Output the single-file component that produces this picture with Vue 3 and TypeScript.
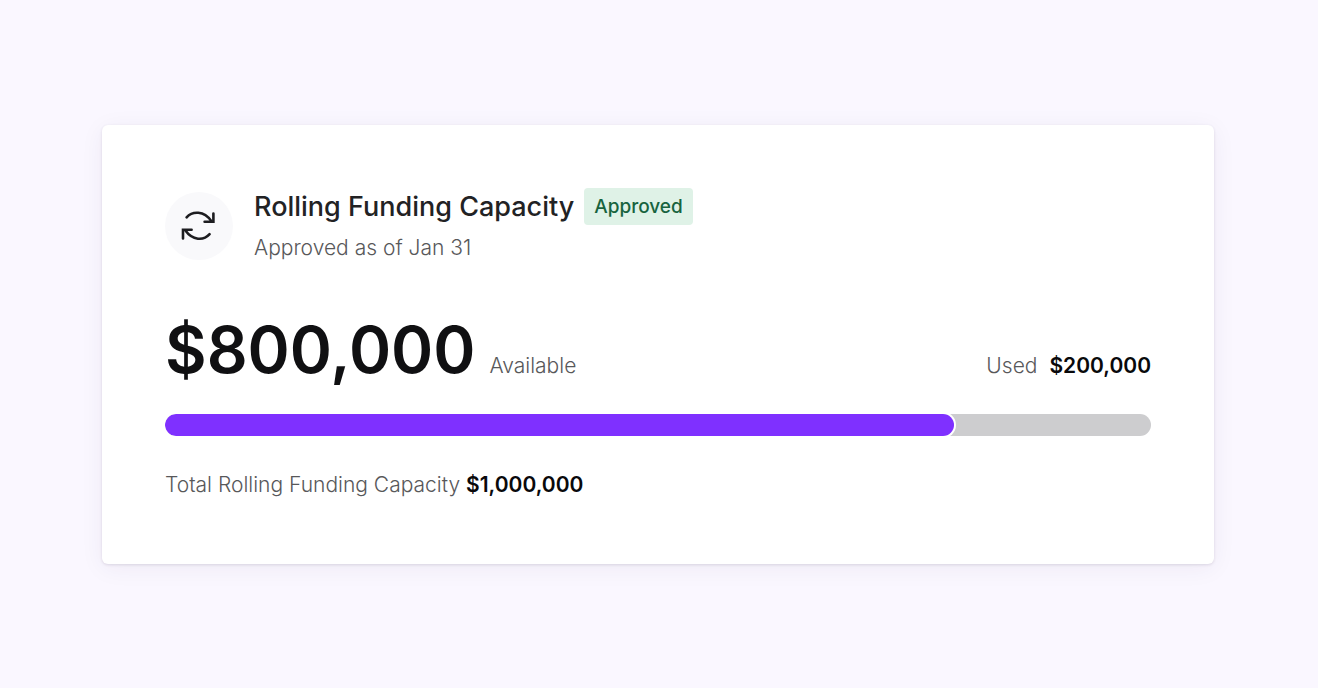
<script setup lang="ts">
import { computed } from 'vue'

const total = 1000000
const used = 200000
const available = computed(() => total - used)
const availableShare = computed(() => `${(available.value / total) * 100}%`)

function money(value: number): string {
  return '$' + value.toLocaleString('en-US')
}
</script>

<template>
  <main class="page">
    <section class="card" aria-labelledby="capacity-title">
      <header class="header">
        <div class="icon">
          <svg width="36" height="36" viewBox="0 0 36 36" fill="none" aria-hidden="true">
            <path d="M5.6 9.4C11.5 2.8 23 2.6 30.2 13" />
            <path d="M32.4 5.5V13.8H23.6" />
            <path d="M28.6 26.2C22.5 33 11.5 32.6 4.4 22.6" />
            <path d="M2 30.4V21.8H10.6" />
          </svg>
        </div>
        <div class="heading">
          <div class="title-row">
            <h1 id="capacity-title" class="title">Rolling Funding Capacity</h1>
            <span class="badge">Approved</span>
          </div>
          <p class="subtitle">Approved as of Jan 31</p>
        </div>
      </header>

      <div class="amounts">
        <div class="available">
          <span class="amount">{{ money(available) }}</span>
          <span class="label">Available</span>
        </div>
        <div class="used">
          <span class="label">Used</span>
          <strong class="value">{{ money(used) }}</strong>
        </div>
      </div>

      <div
        class="track"
        role="progressbar"
        aria-label="Available capacity"
        aria-valuemin="0"
        :aria-valuemax="total"
        :aria-valuenow="available"
      >
        <div class="fill" :style="{ width: availableShare }"></div>
      </div>

      <p class="total">
        <span class="label">Total Rolling Funding Capacity</span>
        <strong class="value">{{ money(total) }}</strong>
      </p>
    </section>
  </main>
</template>

<style>
body {
  margin: 0;
  background: #faf7ff;
}
</style>

<style scoped>
.page {
  box-sizing: border-box;
  min-height: 100vh;
  padding: 24px 104px 24px 102px;
  display: flex;
  align-items: center;
  font-family: Inter, "Liberation Sans", sans-serif;
  color: #58585a;
}

.card {
  flex: 1;
  min-width: 0;
  padding: 63px;
  border-radius: 6px;
  background: #fff;
  box-shadow: 0 1px 3px rgba(30, 20, 60, 0.12), 0 4px 24px rgba(50, 30, 80, 0.06);
}

.header {
  display: flex;
  align-items: center;
  gap: 21px;
}

.icon {
  flex: none;
  width: 68px;
  height: 68px;
  border-radius: 50%;
  background: #f9f9fb;
  display: flex;
  align-items: center;
  justify-content: center;
}

.icon svg {
  stroke: #1d1d20;
  stroke-width: 2.6;
  stroke-linecap: round;
  stroke-linejoin: miter;
}

.title-row {
  display: flex;
  align-items: center;
  gap: 10px;
}

.title {
  margin: 0;
  font-size: 27px;
  line-height: 38px;
  font-weight: 500;
  color: #222224;
}

.badge {
  padding: 0 10px;
  border-radius: 4px;
  background: #dff2e7;
  color: #18643f;
  font-size: 19px;
  line-height: 37px;
  font-weight: 500;
}

.subtitle {
  margin: 6px 0 0;
  font-size: 21px;
  line-height: 32px;
  font-weight: 300;
}

.amounts {
  margin-top: 46px;
  display: flex;
  align-items: baseline;
  justify-content: space-between;
}

.available {
  display: flex;
  align-items: baseline;
  gap: 14px;
}

.amount {
  font-size: 64px;
  line-height: 80px;
  font-weight: 600;
  color: #101012;
}

.used {
  display: flex;
  align-items: baseline;
  gap: 12px;
}

.label {
  font-size: 21px;
  line-height: 32px;
  font-weight: 300;
}

.value {
  font-size: 21px;
  line-height: 32px;
  font-weight: 600;
  color: #09090b;
}

.track {
  height: 22px;
  margin-top: 24px;
  border-radius: 11px;
  background: #cdcdcf;
  overflow: hidden;
}

.fill {
  height: 100%;
  border-radius: 11px;
  background: #7f30ff;
  box-shadow: 0 0 0 2px #fff;
}

.total {
  margin: 33px 0 0;
  display: flex;
  align-items: baseline;
  gap: 6px;
}
</style>
